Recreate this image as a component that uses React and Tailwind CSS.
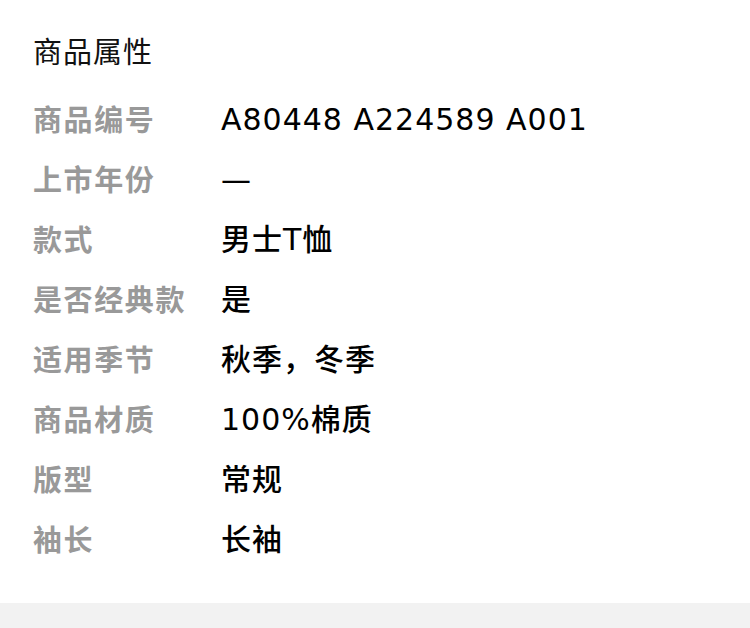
import React from 'react';

const rows = [
  ['商品编号', 'A80448 A224589 A001'],
  ['上市年份', '—'],
  ['款式', '男士T恤'],
  ['是否经典款', '是'],
  ['适用季节', '秋季，冬季'],
  ['商品材质', '100%棉质'],
  ['版型', '常规'],
  ['袖长', '长袖'],
];

function App() {
  return (
    <div className="min-h-screen bg-white font-['Noto_Sans_CJK_SC',sans-serif]">
      <div className="px-[33px] pt-[30px] pb-[34px]">
        <h2 className="h-[40px] text-[29px] leading-[40px] tracking-[1px] text-[#111] font-normal">商品属性</h2>
        <div className="mt-[19px] flex flex-col">
          {rows.map(([label, value]) => (
            <div key={label} className="flex h-[60px] items-center">
              <span className="w-[188px] shrink-0 text-[29px] tracking-[1.6px] font-bold text-[#999]">{label}</span>
              <span className="font-['DejaVu_Sans','Noto_Sans_CJK_SC',sans-serif] text-[30px] tracking-[1px] font-medium text-black">{value}</span>
            </div>
          ))}
        </div>
      </div>
      <div className="h-[25px] bg-[#f2f2f2]"></div>
    </div>
  );
}

export default App;
